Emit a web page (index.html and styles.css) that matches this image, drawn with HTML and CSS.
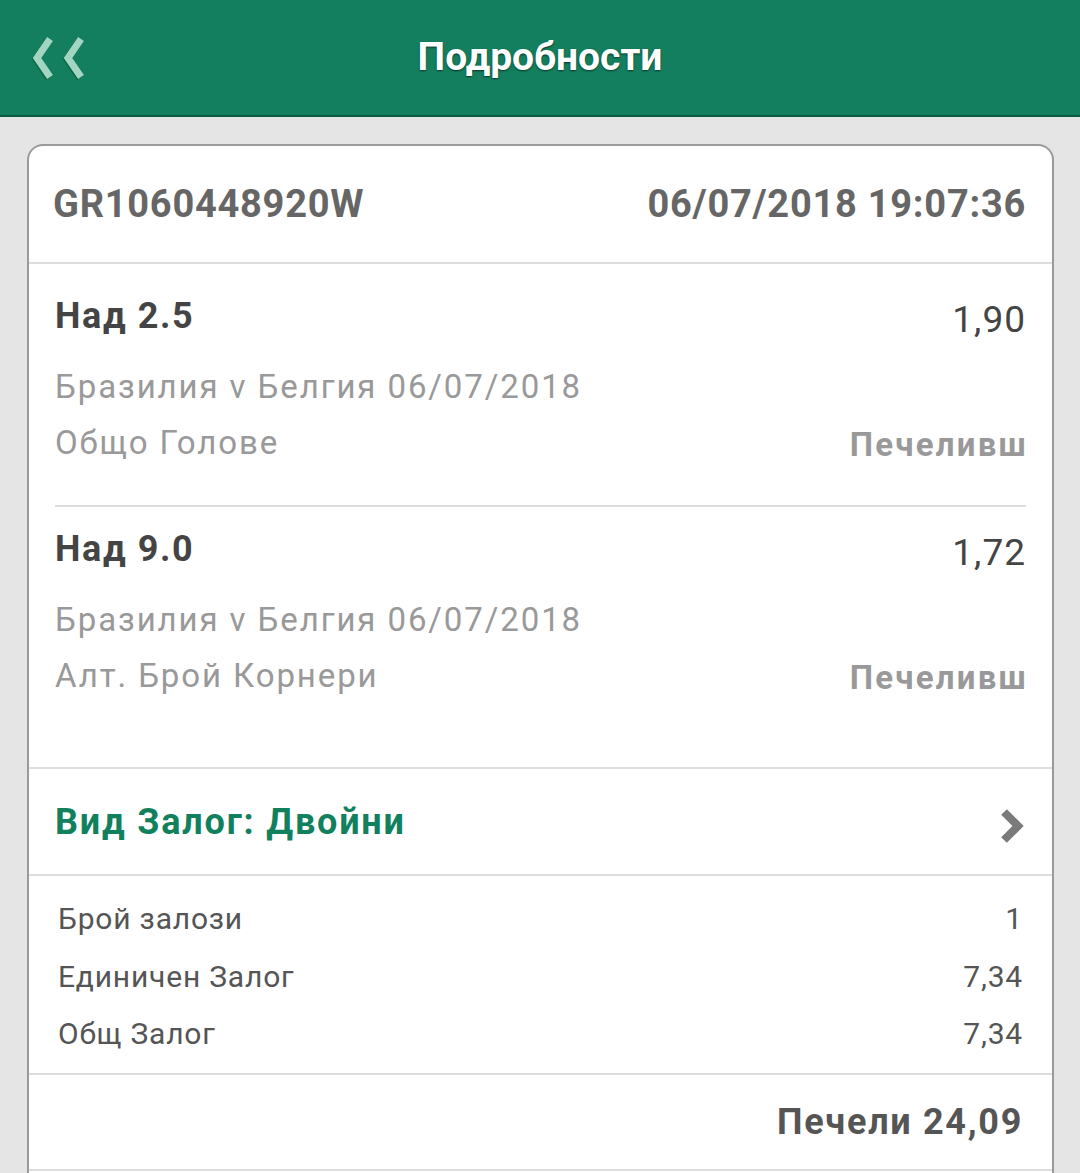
FILE: index.html
```html
<!DOCTYPE html>
<html lang="bg">
<head>
  <meta charset="UTF-8" />
  <meta name="viewport" content="width=device-width, initial-scale=1.0"/>
  <title>Подробности</title>
  <link rel="stylesheet" href="styles.css">
</head>
<body>

  <div class="topbar">
    <a href="#" class="back">
      <svg width="56" height="48" viewBox="0 0 56 48">
        <g fill="none" stroke="#0a4f38" stroke-width="7" stroke-linejoin="miter" opacity="0.6">
          <polyline points="18,6 5,25 18,44" />
          <polyline points="49,6 36,25 49,44" />
        </g>
        <g fill="none" stroke="#a3d6c2" stroke-width="7" stroke-linejoin="miter">
          <polyline points="19,5 6,24 19,43" />
          <polyline points="50,5 37,24 50,43" />
        </g>
      </svg>
    </a>
    <div class="title">Подробности</div>
  </div>

  <div class="card">
    <div class="card-head">
      <span>GR1060448920W</span>
      <span>06/07/2018 19:07:36</span>
    </div>

    <div class="selections">
      <div class="selection">
        <div class="sel-top">
          <span class="sel-name">Над 2.5</span>
          <span class="sel-odds">1,90</span>
        </div>
        <div class="sel-line">Бразилия v Белгия 06/07/2018</div>
        <div class="sel-line">
          <span>Общо Голове</span>
          <span class="sel-status">Печеливш</span>
        </div>
      </div>
      <div class="selection">
        <div class="sel-top">
          <span class="sel-name">Над 9.0</span>
          <span class="sel-odds">1,72</span>
        </div>
        <div class="sel-line">Бразилия v Белгия 06/07/2018</div>
        <div class="sel-line">
          <span>Алт. Брой Корнери</span>
          <span class="sel-status">Печеливш</span>
        </div>
      </div>
    </div>

    <div class="bet-type">
      <span>Вид Залог: Двойни</span>
      <svg width="32" height="40" viewBox="0 0 32 40" class="chev">
        <polyline points="8,6 22,20 8,34" fill="none" stroke="#7a7a7a" stroke-width="8" />
      </svg>
    </div>

    <div class="stats">
      <div class="stat"><span>Брой залози</span><span>1</span></div>
      <div class="stat"><span>Единичен Залог</span><span>7,34</span></div>
      <div class="stat"><span>Общ Залог</span><span>7,34</span></div>
    </div>

    <div class="total">Печели 24,09</div>

    <div class="more"></div>
  </div>

</body>
</html>
```

FILE: styles.css
```css
body {
  font-family: Roboto, "Noto Sans", sans-serif;
  margin: 0;
  background-color: #e5e5e5;
  color: #444;
}

.topbar {
  background-color: #137f5e;
  height: 115px;
  border-bottom: 2px solid #0c5a40;
  display: flex;
  align-items: center;
  justify-content: center;
  position: relative;
}

.back {
  position: absolute;
  left: 31px;
  top: 34px;
}

.title {
  color: #fff;
  font-size: 39px;
  font-weight: bold;
  text-shadow: 0 1px 2px rgba(0,0,0,0.6);
  margin-top: -2px;
}

.card {
  margin: 27px 26px 0 27px;
  background: #fff;
  border: 2px solid #9a9a9a;
  border-radius: 16px 16px 0 0;
  border-bottom: none;
}

.card-head {
  height: 116px;
  display: flex;
  justify-content: space-between;
  align-items: center;
  padding: 0 26px 0 24px;
  font-size: 38px;
  font-weight: bold;
  letter-spacing: 0.75px;
  color: #666;
  border-bottom: 2px solid #ddd;
}

.selections {
  padding: 10px 26px 29px;
  border-bottom: 2px solid #ddd;
}

.selection {
  padding: 18px 0 35px;
}

.selection + .selection {
  border-top: 2px solid #ddd;
}

.sel-top {
  height: 48px;
  display: flex;
  justify-content: space-between;
  align-items: center;
  margin-bottom: 18px;
}

.sel-name {
  font-size: 36px;
  font-weight: bold;
  letter-spacing: 1.6px;
  color: #444;
}

.sel-odds {
  font-size: 37px;
  letter-spacing: 1px;
  color: #444;
  margin-top: 6px;
}

.sel-line {
  height: 56px;
  display: flex;
  justify-content: space-between;
  align-items: center;
  font-size: 33px;
  letter-spacing: 1.9px;
  color: #999;
}

.sel-status {
  font-weight: bold;
  font-size: 33px;
  letter-spacing: 2.2px;
  margin-top: 4px;
  margin-right: -2px;
}

.bet-type {
  height: 105px;
  display: flex;
  justify-content: space-between;
  align-items: center;
  padding: 0 26px;
  font-size: 36px;
  font-weight: bold;
  letter-spacing: 1.8px;
  color: #11805d;
  border-bottom: 2px solid #ddd;
}

.chev {
  margin-top: 8px;
  margin-right: -2px;
}

.stats {
  padding: 14px 29px 10px;
  border-bottom: 2px solid #ddd;
}

.stat {
  height: 57.5px;
  display: flex;
  justify-content: space-between;
  align-items: center;
  font-size: 30px;
  letter-spacing: 0.8px;
  color: #555;
}

.total {
  height: 94px;
  display: flex;
  justify-content: flex-end;
  align-items: center;
  padding: 0 29px;
  font-size: 36px;
  font-weight: bold;
  letter-spacing: 1.7px;
  color: #555;
  border-bottom: 2px solid #ddd;
}

.more {
  height: 100px;
}
```
